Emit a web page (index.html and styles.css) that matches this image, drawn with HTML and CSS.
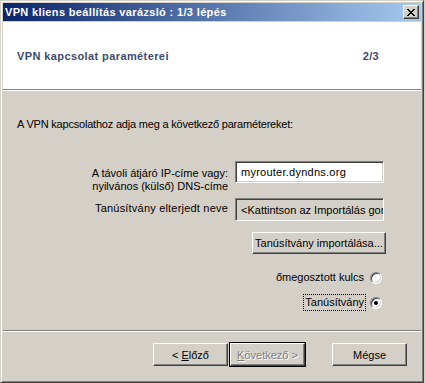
FILE: index.html
```html
<!DOCTYPE html>
<html lang="hu">
<head>
    <meta charset="UTF-8">
    <title>VPN kliens beállítás varázsló</title>
    <link rel="stylesheet" href="styles.css">
</head>
<body>
    <div class="window">
        <div class="titlebar">
            <span class="title">VPN kliens beállítás varázsló : 1/3 lépés</span>
            <span class="close-btn">
                <svg width="8" height="7" viewBox="0 0 8 7">
                    <path d="M0 0h2v1h1v1h2v-1h1v-1h2v1h-1v1h-1v1h-1v1h1v1h1v1h1v1h-2v-1h-1v-1h-2v1h-1v1h-2v-1h1v-1h1v-1h1v-1h-1v-1h-1v-1h-1z" fill="#000"/>
                </svg>
            </span>
        </div>

        <div class="header">
            <span class="header-title">VPN kapcsolat paraméterei</span>
            <span class="header-step">2/3</span>
        </div>

        <div class="content">
            <p class="intro">A VPN kapcsolathoz adja meg a következő paramétereket:</p>

            <div class="row row-address">
                <label class="field-label">A távoli átjáró IP-címe vagy:<br>nyilvános (külső) DNS-címe</label>
                <div class="edit">myrouter.dyndns.org</div>
            </div>

            <div class="row row-cert">
                <label class="field-label cert-label">Tanúsítvány elterjedt neve</label>
                <div class="edit edit-disabled">&lt;Kattintson az Importálás gomb</div>
            </div>

            <div class="row row-import">
                <span class="push-btn import-btn">Tanúsítvány importálása...</span>
            </div>

            <div class="row row-radio">
                <span class="radio-label">őmegosztott kulcs</span>
                <span class="radio"></span>
            </div>

            <div class="row row-radio row-radio-2">
                <span class="radio-label focused">Tanúsítvány</span>
                <span class="radio checked"></span>
            </div>
        </div>

        <div class="footer">
            <span class="push-btn nav-btn">&lt;&nbsp;<u>E</u>lőző</span>
            <span class="push-btn nav-btn default-btn disabled"><u>K</u>övetkező&nbsp;&gt;</span>
            <span class="push-btn nav-btn cancel-btn">Mégse</span>
        </div>
    </div>
</body>
</html>
```

FILE: styles.css
```css
body {
    margin: 0;
    padding: 0;
    background-color: #d4d0c8;
    font-family: "Liberation Sans", Arial, sans-serif;
    font-size: 11px;
    color: #000;
}

/* classic window frame */
.window {
    box-sizing: border-box;
    width: 424px;
    height: 383px;
    padding: 2px;
    border: 1px solid;
    border-color: #d4d0c8 #404040 #404040 #d4d0c8;
    box-shadow: inset 1px 1px #fff, inset -1px -1px #808080;
    background-color: #d4d0c8;
    display: flex;
    flex-direction: column;
}

.titlebar {
    height: 18px;
    margin-bottom: 1px;
    background: linear-gradient(to right, #0a246a, #a6caf0);
    display: flex;
    align-items: center;
    justify-content: space-between;
    padding: 0 2px 0 2px;
}

.title {
    color: #fff;
    font-weight: bold;
    font-size: 11px;
    letter-spacing: 0.35px;
}

.close-btn {
    box-sizing: border-box;
    width: 16px;
    height: 14px;
    background-color: #d4d0c8;
    border: 1px solid;
    border-color: #fff #404040 #404040 #fff;
    box-shadow: inset -1px -1px #808080;
    display: flex;
    align-items: center;
    justify-content: center;
    padding-right: 1px;
}

.header {
    height: 67px;
    background-color: #fff;
    border-bottom: 1px solid #808080;
    display: flex;
    align-items: center;
    justify-content: space-between;
    padding: 0 42px 0 14px;
    font-weight: bold;
    color: #3e4b6c;
}

.header-title {
    letter-spacing: 0.4px;
}

.header-step {
    letter-spacing: 0.3px;
}

.content {
    flex: 1;
    border-top: 1px solid #fff;
    border-bottom: 1px solid #808080;
    padding: 27px 37px 0 14px;
}

.intro {
    margin: 0;
    line-height: 13px;
    letter-spacing: -0.2px;
}

.row {
    display: flex;
    justify-content: flex-end;
    align-items: flex-start;
    gap: 7px;
}

.field-label {
    text-align: right;
    line-height: 13px;
}

.cert-label {
    letter-spacing: 0.2px;
}

.row-address {
    margin-top: 30px;
}

.row-address .field-label {
    padding-top: 6px;
}

.row-cert {
    margin-top: 5px;
}

.row-cert .field-label {
    padding-top: 4px;
}

/* sunken edit boxes */
.edit {
    box-sizing: border-box;
    width: 149px;
    height: 22px;
    padding: 4px 5px 0 5px;
    background-color: #fff;
    border: 1px solid;
    border-color: #808080 #fff #fff #808080;
    box-shadow: inset 1px 1px #404040, inset -1px -1px #d4d0c8;
    font-size: 11px;
    line-height: 13px;
    letter-spacing: 0.25px;
    white-space: nowrap;
    overflow: hidden;
}

.edit-disabled {
    background-color: #d4d0c8;
    height: 23px;
    letter-spacing: 0;
    padding-top: 5px;
}

/* raised push buttons */
.push-btn {
    box-sizing: border-box;
    height: 23px;
    background-color: #d4d0c8;
    border: 1px solid;
    border-color: #fff #404040 #404040 #fff;
    box-shadow: inset -1px -1px #808080;
    display: flex;
    align-items: center;
    justify-content: center;
    white-space: nowrap;
}

.row-import {
    margin-top: 11px;
    margin-right: -2px;
}

.import-btn {
    width: 134px;
    height: 22px;
}

.row-radio {
    margin-top: 17px;
    align-items: center;
    gap: 6px;
    margin-right: 2px;
}

.row-radio-2 {
    margin-top: 12px;
}

.radio-label {
    line-height: 13px;
}

.radio-label.focused {
    outline: 1px dotted #000;
    outline-offset: 1px;
}

.radio {
    box-sizing: border-box;
    width: 12px;
    height: 12px;
    border-radius: 50%;
    background-color: #fff;
    border: 1px solid;
    border-color: #808080 #fff #fff #808080;
    box-shadow: inset 1px 1px #404040, inset -1px -1px #d4d0c8;
    display: flex;
    align-items: center;
    justify-content: center;
}

.radio.checked::after {
    content: "";
    width: 4px;
    height: 4px;
    border-radius: 50%;
    background-color: #000;
}

.footer {
    border-top: 1px solid #fff;
    padding: 11px 14px 14px 0;
    display: flex;
    justify-content: flex-end;
}

.nav-btn {
    width: 75px;
}

.default-btn {
    outline: 1px solid #000;
    margin-left: 2px;
}

.disabled {
    color: #808080;
    text-shadow: 1px 1px #fff;
}

.cancel-btn {
    margin-left: 27px;
}
```
